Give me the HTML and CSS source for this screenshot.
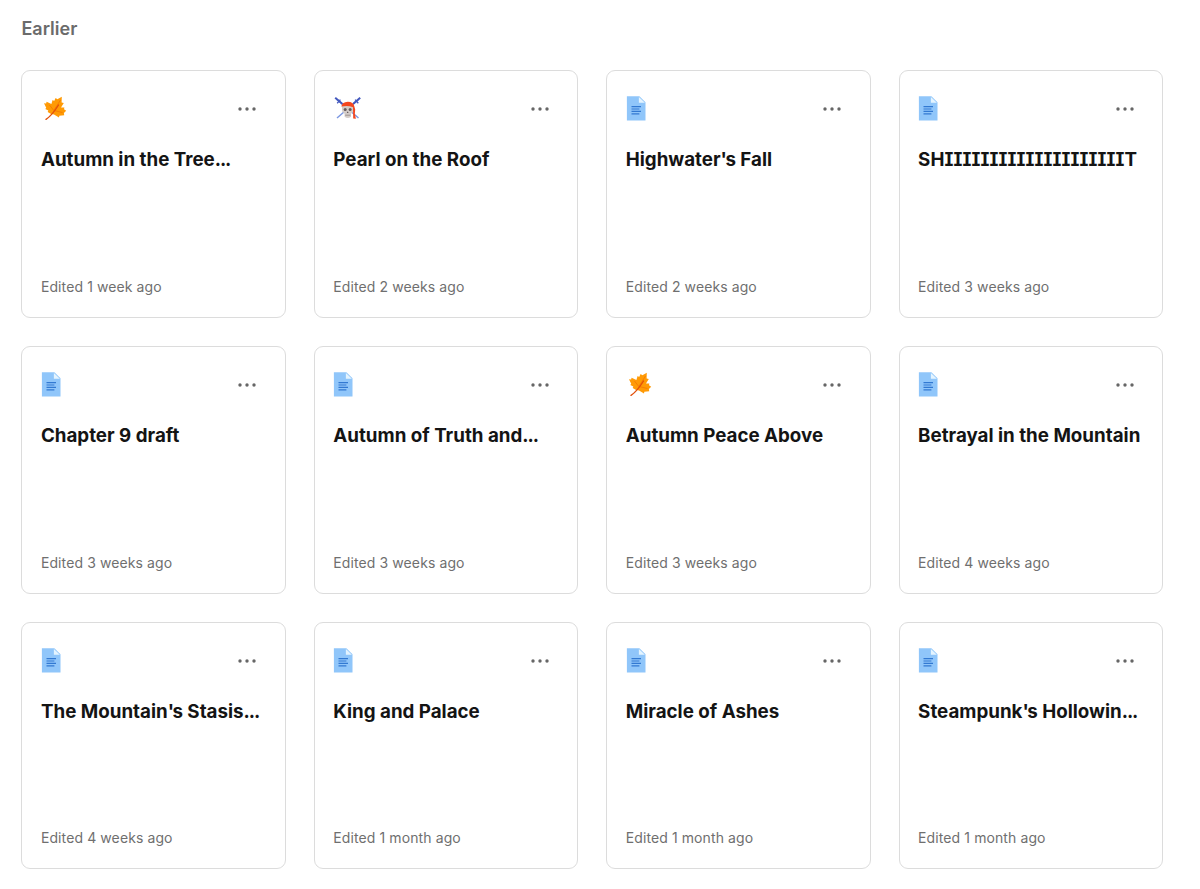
FILE: index.html
```html
<!DOCTYPE html>
<html lang="en">
<head>
<meta charset="utf-8">
<title>Documents</title>
<link rel="stylesheet" href="styles.css">
</head>
<body>
<svg class="defs" width="0" height="0">
  <symbol id="doc" viewBox="0 0 28 28">
    <path d="M.9 1.2H13.4L19.5 7.3V25.4H.9z" fill="#90c6fa"/>
    <path d="M12.9 2V7.7H18.9z" fill="#e4f4ff"/>
    <path d="M5.5 11.6H15M5.5 14H13.4M5.5 16.4H15M5.5 18.8H13.4" stroke="#3279d2" stroke-width="1.2" fill="none"/>
  </symbol>
  <symbol id="leaf" viewBox="0 0 28 28">
    <path d="M9.6 18.7L6.7 17.1L7.3 15.6L4.3 14L5.2 12.7L3 8.2L5.1 8.6L5.6 6.8L10.4 9L11.6 4.9L13.2 6L14.6 3L16.4 4.2L20.8 1.8L20.6 7.4L22.8 8L20 12.4L23.4 12.5L23 14.3L25.2 15.7L22.9 18L23.2 20.2L18.3 20.7L18 22.6L13 19.6z" fill="#ff9a05"/>
    <path d="M8.5 10L12.8 15.5M19.5 5L12.8 15.5M12.8 15.5L21.5 17.5" stroke="#f57c00" stroke-width=".9" fill="none"/>
    <path d="M5 24.3Q11 20.5 17.5 10" stroke="#e2500c" stroke-width="1.4" fill="none" stroke-linecap="round"/>
  </symbol>
  <symbol id="pirate" viewBox="0 0 28 28">
    <path d="M4 4.5L25.5 23M25.5 4.5L4 23" stroke="#7c98e2" stroke-width="1.5"/>
    <path d="M2.2 2.8L9.5 9M27.2 2.8L20 9" stroke="#4358be" stroke-width="2"/>
    <path d="M4.2 8.2L7.4 4.6M25.3 8.2L22.1 4.6" stroke="#4358be" stroke-width="1.3"/>
    <path d="M8.9 11.5Q9 7.6 14.8 7.6T20.6 11.5L20.4 16.5L18 18.8V21.8Q14.8 24.4 11.6 21.8V18.8L9.2 16.5z" fill="#d3ccc8"/>
    <path d="M8.3 11.6Q9.2 7 14.8 6.8Q20.4 7 21.3 11.2L22.2 14.5L21.8 19L22.9 23.8L20.2 23.6L20 12.2Q14.8 10 8.3 11.6z" fill="#f4471f"/>
    <circle cx="12.2" cy="14.4" r="1.5" fill="#655a5b"/>
    <circle cx="17.1" cy="14.4" r="1.5" fill="#655a5b"/>
    <path d="M14.7 16.2L13.9 18H15.5z" fill="#54474a"/>
    <path d="M12.2 20.2H17.4" stroke="#8b7d7a" stroke-width=".7"/>
  </symbol>
  <symbol id="dots" viewBox="0 0 20 6">
    <circle cx="3" cy="3" r="1.7"/><circle cx="10" cy="3" r="1.7"/><circle cx="17" cy="3" r="1.7"/>
  </symbol>
</svg>
<main class="page">
  <h2 class="heading">Earlier</h2>
  <div class="grid">
    <article class="card"><div class="top"><svg class="icon"><use href="#leaf"/></svg><svg class="more"><use href="#dots"/></svg></div><h3 class="title">Autumn in the Tree<span class="ellipsis">...</span></h3><p class="edited">Edited 1 week ago</p></article>
    <article class="card"><div class="top"><svg class="icon"><use href="#pirate"/></svg><svg class="more"><use href="#dots"/></svg></div><h3 class="title">Pearl on the Roof</h3><p class="edited">Edited 2 weeks ago</p></article>
    <article class="card"><div class="top"><svg class="icon"><use href="#doc"/></svg><svg class="more"><use href="#dots"/></svg></div><h3 class="title">Highwater<span class="apostrophe">'</span>s Fall</h3><p class="edited">Edited 2 weeks ago</p></article>
    <article class="card"><div class="top"><svg class="icon"><use href="#doc"/></svg><svg class="more"><use href="#dots"/></svg></div><h3 class="title caps">SHIIIIIIIIIIIIIIIIIIIIT</h3><p class="edited">Edited 3 weeks ago</p></article>
    <article class="card"><div class="top"><svg class="icon"><use href="#doc"/></svg><svg class="more"><use href="#dots"/></svg></div><h3 class="title">Chapter 9 draft</h3><p class="edited">Edited 3 weeks ago</p></article>
    <article class="card"><div class="top"><svg class="icon"><use href="#doc"/></svg><svg class="more"><use href="#dots"/></svg></div><h3 class="title">Autumn of Truth and<span class="ellipsis">...</span></h3><p class="edited">Edited 3 weeks ago</p></article>
    <article class="card"><div class="top"><svg class="icon"><use href="#leaf"/></svg><svg class="more"><use href="#dots"/></svg></div><h3 class="title">Autumn Peace Above</h3><p class="edited">Edited 3 weeks ago</p></article>
    <article class="card"><div class="top"><svg class="icon"><use href="#doc"/></svg><svg class="more"><use href="#dots"/></svg></div><h3 class="title">Betrayal in the Mountain</h3><p class="edited">Edited 4 weeks ago</p></article>
    <article class="card"><div class="top"><svg class="icon"><use href="#doc"/></svg><svg class="more"><use href="#dots"/></svg></div><h3 class="title">The Mountain<span class="apostrophe">'</span>s Stasis<span class="ellipsis">...</span></h3><p class="edited">Edited 4 weeks ago</p></article>
    <article class="card"><div class="top"><svg class="icon"><use href="#doc"/></svg><svg class="more"><use href="#dots"/></svg></div><h3 class="title">King and Palace</h3><p class="edited">Edited 1 month ago</p></article>
    <article class="card"><div class="top"><svg class="icon"><use href="#doc"/></svg><svg class="more"><use href="#dots"/></svg></div><h3 class="title">Miracle of Ashes</h3><p class="edited">Edited 1 month ago</p></article>
    <article class="card"><div class="top"><svg class="icon"><use href="#doc"/></svg><svg class="more"><use href="#dots"/></svg></div><h3 class="title">Steampunk<span class="apostrophe">'</span>s Hollowin<span class="ellipsis">...</span></h3><p class="edited">Edited 1 month ago</p></article>
  </div>
</main>
</body>
</html>
```
FILE: styles.css
```css
* { box-sizing: border-box; }
body {
  margin: 0;
  background: #fff;
  font-family: Inter, "Liberation Sans", sans-serif;
  font-feature-settings: "cv08";
}
.defs { display: block; }
.page { width: 1163px; padding: 17px 0 0 21.45px; }
.heading {
  margin: 0 0 29px;
  font-size: 18px;
  line-height: 24px;
  font-weight: 600;
  color: #6b6b6b;
}
.grid {
  display: grid;
  grid-template-columns: repeat(4, 1fr);
  grid-auto-rows: 247.8px;
  gap: 28px;
}
.card {
  display: flex;
  flex-direction: column;
  border: 1px solid #dcdcdc;
  border-radius: 9px;
  padding: 24px 18.5px 20px;
}
.top {
  display: flex;
  justify-content: space-between;
  align-items: center;
  height: 28px;
  padding-right: 9px;
}
.icon { width: 28px; height: 28px; }
.more { width: 20px; height: 6px; fill: #666; }
.title {
  margin: 24.4px 0 0;
  font-size: 18.75px;
  line-height: 26px;
  font-weight: 650;
  color: #141414;
  white-space: nowrap;
}
.caps { letter-spacing: .06px; }
.apostrophe { letter-spacing: -1.6px; }
.ellipsis { letter-spacing: -1.1px; }
.edited {
  margin: auto 0 0;
  font-size: 14px;
  line-height: 20px;
  letter-spacing: .1px;
  color: #6f6f6f;
}
```
